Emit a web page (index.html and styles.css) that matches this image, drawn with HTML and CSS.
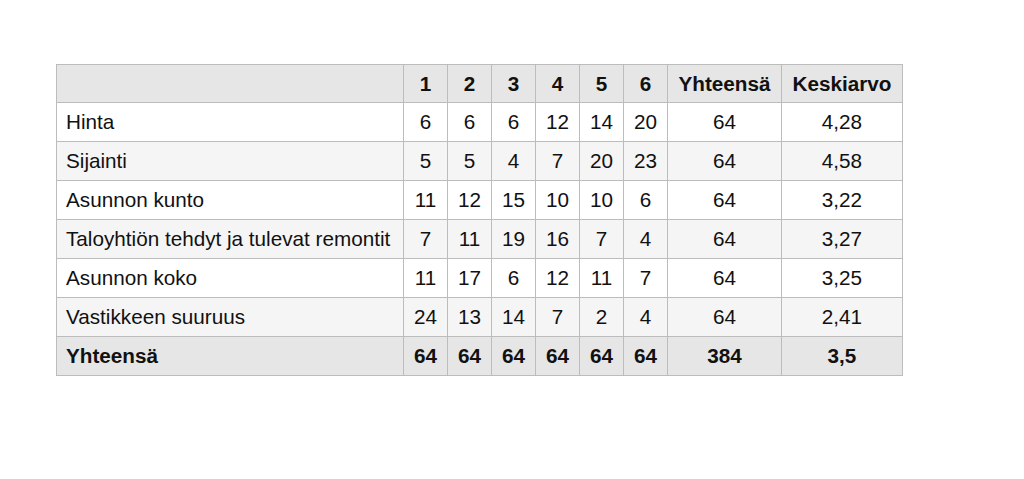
FILE: index.html
```html
<!DOCTYPE html>
<html lang="fi">
<head>
<meta charset="utf-8">
<link rel="stylesheet" href="styles.css">
</head>
<body>
<div class="page">
<table class="stats">
<colgroup>
<col class="c-label"><col class="c-num"><col class="c-num"><col class="c-num"><col class="c-num"><col class="c-num"><col class="c-num"><col class="c-total"><col class="c-avg">
</colgroup>
<thead>
<tr><th></th><th>1</th><th>2</th><th>3</th><th>4</th><th>5</th><th>6</th><th>Yhteensä</th><th>Keskiarvo</th></tr>
</thead>
<tbody>
<tr><td>Hinta</td><td>6</td><td>6</td><td>6</td><td>12</td><td>14</td><td>20</td><td>64</td><td>4,28</td></tr>
<tr><td>Sijainti</td><td>5</td><td>5</td><td>4</td><td>7</td><td>20</td><td>23</td><td>64</td><td>4,58</td></tr>
<tr><td>Asunnon kunto</td><td>11</td><td>12</td><td>15</td><td>10</td><td>10</td><td>6</td><td>64</td><td>3,22</td></tr>
<tr><td>Taloyhtiön tehdyt ja tulevat remontit</td><td>7</td><td>11</td><td>19</td><td>16</td><td>7</td><td>4</td><td>64</td><td>3,27</td></tr>
<tr><td>Asunnon koko</td><td>11</td><td>17</td><td>6</td><td>12</td><td>11</td><td>7</td><td>64</td><td>3,25</td></tr>
<tr><td>Vastikkeen suuruus</td><td>24</td><td>13</td><td>14</td><td>7</td><td>2</td><td>4</td><td>64</td><td>2,41</td></tr>
</tbody>
<tfoot>
<tr><th>Yhteensä</th><th>64</th><th>64</th><th>64</th><th>64</th><th>64</th><th>64</th><th>384</th><th>3,5</th></tr>
</tfoot>
</table>
</div>
</body>
</html>
```
FILE: styles.css
```css
html, body {
  margin: 0;
  padding: 0;
  background: #ffffff;
}
.page {
  padding: 64px 0 0 56px;
  font-family: "Liberation Sans", Arial, sans-serif;
  font-size: 20.7px;
  color: #111111;
}
.stats {
  border-collapse: collapse;
  table-layout: fixed;
  width: 846px;
}
.c-label { width: 347px; }
.c-num { width: 44px; }
.c-total { width: 114px; }
.c-avg { width: 121px; }
.stats th, .stats td {
  border: 1px solid #bcbcbc;
  height: 39px;
  padding: 0;
  box-sizing: border-box;
  text-align: center;
  white-space: nowrap;
}
.stats thead th {
  height: 38px;
}
.stats td:first-child, .stats th:first-child {
  text-align: left;
  padding-left: 9px;
}
.stats thead th, .stats tfoot th {
  background: #e6e6e6;
  font-weight: bold;
}
.stats tbody tr:nth-child(odd) td { background: #ffffff; }
.stats tbody tr:nth-child(even) td { background: #f5f5f5; }
```
